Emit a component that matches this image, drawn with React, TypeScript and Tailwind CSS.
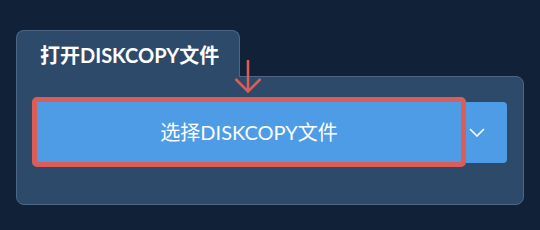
import React from "react";

const font = { fontFamily: 'Lato, "Noto Sans CJK SC", sans-serif' };

function DownArrow() {
  return (
    <svg
      className="absolute left-[234px] top-[60px]"
      width="28"
      height="34"
      viewBox="0 0 28 34"
      fill="none"
      stroke="#dc5d58"
      strokeWidth="2.5"
      strokeLinecap="butt"
    >
      <path d="M14 0 V32" />
      <path d="M1.5 19 L14 31.5 L26.5 19" />
    </svg>
  );
}

export default function App() {
  return (
    <div
      className="relative w-[540px] h-[230px] bg-[#112238] pt-[30px] pl-[16px] overflow-hidden"
      style={font}
    >
      <div className="w-[508px] flex flex-col items-start">
        <div className="relative z-10 -mb-px h-[47px] w-[224px] rounded-t-lg border border-b-0 border-[#4c6785] bg-[#2e4a6a] pl-[23px] pt-[11px]">
          <span className="block text-[20px] font-bold leading-[26px] text-white">打开DISKCOPY文件</span>
        </div>
        <div className="w-[508px] h-[129px] rounded-b-lg rounded-tr-lg border border-[#4c6785] bg-[#2e4a6a] pl-[20px] pt-[25px]">
          <div className="flex items-start">
            <button className="-ml-[5px] -my-[5px] h-[70px] w-[434px] rounded-[5px] border-[5px] border-[#dc5d58] bg-[#4e9ce6] text-[20px] font-normal text-white">
              选择DISKCOPY文件
            </button>
            <button className="h-[61px] w-[41px] rounded-r-[4px] bg-[#4e9ce6] pl-[3px] flex items-center">
              <svg width="16" height="9" viewBox="0 0 16 9" fill="none" stroke="white" strokeWidth="1.6">
                <path d="M1 1 L8 8 L15 1" />
              </svg>
            </button>
          </div>
        </div>
      </div>
      <DownArrow />
    </div>
  );
}
